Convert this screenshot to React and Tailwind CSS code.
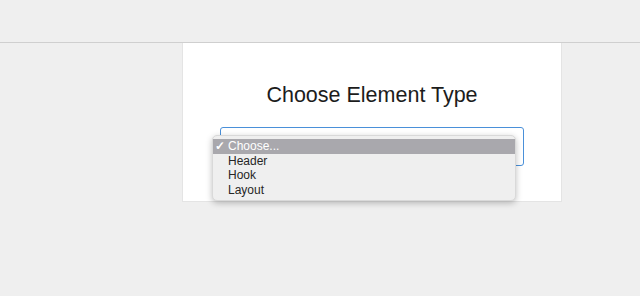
import * as React from "react";

const options = ["Choose...", "Header", "Hook", "Layout"];

export default function App() {
  return (
    <div
      className="w-[640px] h-[296px] bg-[#efefef] overflow-hidden"
      style={{ fontFamily: '"Liberation Sans", Arial, sans-serif' }}
    >
      <div className="h-[43px] border-b border-[#cfcfcf]" />
      <div className="pl-[182px]">
        <div className="relative w-[380px] h-[159px] bg-white border-x border-b border-[#e4e4e4] flex flex-col items-center">
          <h1 className="mt-[39px] text-[21.5px] leading-[26px] text-[#1c1c1c]">
            Choose Element Type
          </h1>
          <div className="mt-[19px] w-[304px] h-[39px] rounded-[3px] border border-[#4a90d9]" />

          {/* open native menu */}
          <div className="absolute left-[29px] top-[92px] w-[304px] rounded-[5px] bg-[#efefef] border border-[#d9d9d9] shadow-[0_2px_6px_rgba(0,0,0,0.25)] py-[3px]">
            {options.map((o, i) => (
              <div
                key={o}
                className={
                  i === 0
                    ? "relative h-[14.5px] pl-[15px] text-[12px] leading-[14.5px] bg-[#a9a8ad] text-white"
                    : "relative h-[14.5px] pl-[15px] text-[12px] leading-[14.5px] text-[#262626]"
                }
              >
                {i === 0 && (
                  <span className="absolute left-[2px] top-0 text-[12px] font-bold">✓</span>
                )}
                {o}
              </div>
            ))}
          </div>
        </div>
      </div>
    </div>
  );
}
